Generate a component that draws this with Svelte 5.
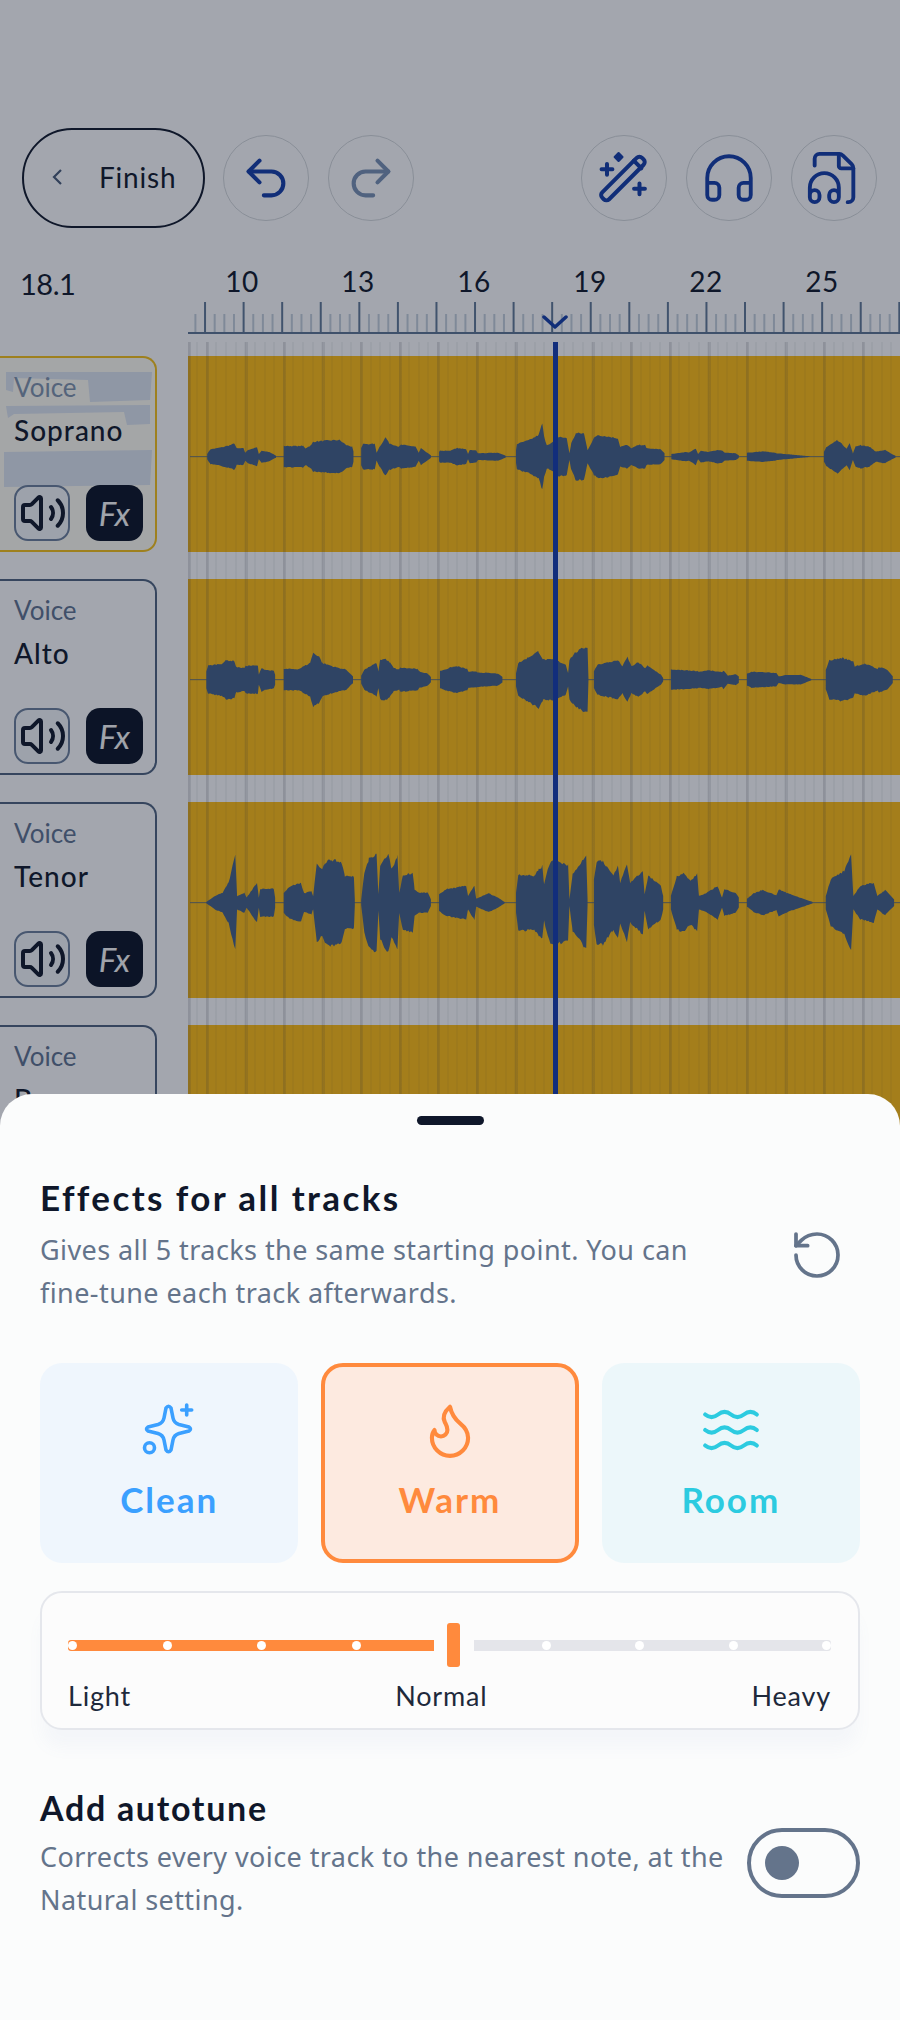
<script>
  // waveform envelopes, [x, half height] in a 1568x588 box
  const waves = [
    [
      [[38,8],[45,22],[70,28],[90,35],[98,40],[103,25],[118,25],[122,12],[128,20],[148,28],[152,8],[158,18],[175,14],[190,3]],
      [[207,32],[250,32],[255,25],[268,35],[272,45],[300,48],[330,50],[345,35],[358,30],[361,15]],
      [[378,25],[382,38],[408,38],[412,12],[418,28],[432,58],[440,40],[462,30],[466,36],[498,30],[505,12],[510,25],[532,4]],
      [[550,14],[552,18],[575,18],[590,26],[610,22],[614,8],[618,20],[632,18],[636,10],[680,12],[697,3]],
      [[720,20],[722,38],[750,50],[770,65],[778,100],[782,60],[788,35],[800,42],[815,60],[832,55],[838,10],[842,40],[852,70],[870,70],[878,20],[892,55],[900,65],[925,60],[945,55],[950,30],[965,35],[975,25],[990,35],[1005,35],[1008,25],[1040,22],[1048,10]],
      [[1063,8],[1095,14],[1102,12],[1117,25],[1122,8],[1128,18],[1145,14],[1165,20],[1176,18],[1180,12],[1205,10],[1212,4]],
      [[1230,12],[1265,16],[1292,12],[1296,10],[1330,6],[1368,1]],
      [[1400,15],[1405,28],[1430,50],[1450,25],[1457,40],[1464,10],[1470,30],[1480,35],[1500,30],[1515,15],[1535,20],[1550,8],[1558,3]]
    ],
    [
      [[36,25],[40,42],[70,48],[80,58],[98,56],[102,38],[120,35],[124,42],[150,42],[152,15],[158,36],[165,30],[185,26],[188,15]],
      [[207,32],[240,32],[265,50],[272,80],[285,70],[292,50],[320,38],[345,30],[360,10]],
      [[378,12],[385,30],[412,50],[416,25],[420,60],[432,62],[442,50],[450,35],[462,30],[464,36],[502,32],[506,25],[525,18],[532,8]],
      [[552,26],[580,38],[590,40],[612,32],[615,24],[632,24],[635,22],[680,18],[690,8]],
      [[720,20],[725,50],[745,65],[770,85],[780,60],[805,60],[830,45],[835,20],[838,60],[850,80],[868,95],[878,98],[880,2]],
      [[892,25],[900,45],[945,58],[955,40],[966,68],[975,40],[990,52],[1005,35],[1010,42],[1040,15],[1045,5]],
      [[1062,30],[1095,28],[1120,26],[1125,24],[1145,28],[1175,22],[1178,28],[1188,12],[1205,16],[1212,10]],
      [[1230,18],[1240,24],[1295,20],[1300,10],[1315,14],[1350,14],[1372,2]],
      [[1404,30],[1412,58],[1440,65],[1465,55],[1468,40],[1490,48],[1505,40],[1518,32],[1522,38],[1540,30],[1552,10]]
    ],
    [
      [[36,2],[55,20],[72,30],[85,60],[100,140],[104,20],[120,30],[125,15],[148,60],[152,15],[155,42],[185,42],[188,15]],
      [[207,30],[220,48],[245,58],[252,28],[268,35],[272,20],[280,120],[292,100],[298,120],[312,130],[335,120],[342,80],[362,78],[364,10]],
      [[378,8],[385,90],[395,130],[412,150],[416,25],[420,110],[438,150],[445,100],[458,140],[462,30],[470,80],[492,90],[496,40],[505,30],[525,30],[532,10]],
      [[550,25],[565,40],[610,50],[614,20],[628,52],[632,12],[660,28],[680,15],[695,2]],
      [[720,30],[725,85],[760,80],[770,100],[778,110],[782,55],[790,100],[798,128],[835,115],[838,10],[845,85],[875,140],[878,10]],
      [[892,70],[898,125],[912,125],[935,80],[945,110],[950,60],[965,115],[972,60],[1000,95],[1004,25],[1012,80],[1040,50],[1045,20]],
      [[1062,20],[1075,80],[1090,88],[1105,65],[1120,85],[1124,20],[1140,28],[1165,50],[1175,15],[1180,40],[1205,30],[1212,15]],
      [[1230,12],[1245,28],[1265,38],[1295,22],[1300,40],[1320,28],[1350,14],[1375,2]],
      [[1404,20],[1415,70],[1445,95],[1460,140],[1465,20],[1480,50],[1510,60],[1518,20],[1535,38],[1555,10]]
    ]
  ];
  const mid = 302;

  let seed = 7;
  function rnd() {
    seed = (seed * 16807) % 2147483647;
    return seed / 2147483647;
  }

  function sample(seg) {
    const out = [];
    for (let i = 0; i < seg.length - 1; i++) {
      const [x0, a0] = seg[i];
      const [x1, a1] = seg[i + 1];
      for (let x = x0; x < x1; x += 3) {
        out.push([x, a0 + ((a1 - a0) * (x - x0)) / (x1 - x0)]);
      }
    }
    out.push(seg[seg.length - 1]);
    return out;
  }

  function wavePath(segs) {
    let d = "";
    for (const seg of segs) {
      const pts = sample(seg);
      const top = pts.map(([x, a]) => `${x} ${(mid - a * (0.96 + rnd() * 0.08)).toFixed(1)}`);
      const bot = pts.reverse().map(([x, a]) => `${x} ${(mid + a * (0.96 + rnd() * 0.08)).toFixed(1)}`);
      d += "M" + top.concat(bot).join("L") + "Z";
    }
    return d;
  }

  const tracks = [
    { name: "Soprano", selected: true, wave: waves[0] },
    { name: "Alto", wave: waves[1] },
    { name: "Tenor", wave: waves[2] },
    { name: "Bass" }
  ];

  const rulerLabels = [10, 13, 16, 19, 22, 25];
  const step = 38.57 / 4;
  const ticks = Array.from({ length: 74 }, (_, i) => ({ x: 7.4 + i * step, major: (i - 1) % 4 === 0 }));

  const dotsOn = [0, 1, 2, 3];
  const dotsOff = [1, 2, 3, 4];
</script>

<div class="app">
  <div class="screen">
    <div class="topbar">
      <button class="finish">
        <svg class="chev" viewBox="0 0 12 20"><path d="M10 3 3 10l7 7" /></svg>
        <span>Finish</span>
      </button>
      <button class="round">
        <svg width="52" height="52" viewBox="0 0 24 24" class="ico navy"><path d="M9 14 4 9l5-5" /><path d="M4 9h10.5a5.5 5.5 0 0 1 0 11H11" /></svg>
      </button>
      <button class="round">
        <svg width="52" height="52" viewBox="0 0 24 24" class="ico slate"><path d="m15 14 5-5-5-5" /><path d="M20 9H9.5a5.5 5.5 0 0 0 0 11H13" /></svg>
      </button>
      <div class="spacer"></div>
      <button class="round">
        <svg width="52" height="52" viewBox="0 0 48 48" class="wand">
          <rect x="-3" y="20" width="52" height="9" rx="3.5" transform="rotate(-45 23 24.5)" />
          <path d="M33 8l7 7" />
          <path d="M8.3 11v10M3.3 16h10M38.3 29v10M33.3 34h10" />
          <path class="gem" d="M19 1l3.6 3.6L19 8.2l-3.6-3.6z" />
        </svg>
      </button>
      <button class="round">
        <svg width="58" height="58" viewBox="0 0 24 24" class="ico navy thin"><path d="M3 14h3a2 2 0 0 1 2 2v3a2 2 0 0 1-2 2H5a2 2 0 0 1-2-2v-7a9 9 0 0 1 18 0v7a2 2 0 0 1-2 2h-1a2 2 0 0 1-2-2v-3a2 2 0 0 1 2-2h3" /></svg>
      </button>
      <button class="round">
        <svg width="58" height="58" viewBox="0 0 24 24" class="ico navy thin"><path d="M4 6.835V4a2 2 0 0 1 2-2h8a2.4 2.4 0 0 1 1.706.706l3.588 3.588A2.4 2.4 0 0 1 20 8v12a2 2 0 0 1-2 2h-.343" /><path d="M14 2v5a1 1 0 0 0 1 1h5" /><path d="M2 19a2 2 0 0 1 4 0v1a2 2 0 0 1-4 0v-4a6 6 0 0 1 12 0v4a2 2 0 0 1-4 0v-1a2 2 0 0 1 4 0" /></svg>
      </button>
    </div>

    <div class="head">
      <div class="time">18.1</div>
      <div class="ruler">
        <div class="labels">
          {#each rulerLabels as n}
            <span>{n}</span>
          {/each}
        </div>
        <svg class="ticks" width="712" height="34">
          {#each ticks as t}
            <line x1={t.x} x2={t.x} y1={t.major ? 1 : 13} y2="32" class:major={t.major} />
          {/each}
          <rect class="base" x="0" y="31" width="712" height="2" />
        </svg>
        <svg class="chevron" width="26" height="16" viewBox="0 0 26 16"><path d="M2 3l11 10L24 3" /></svg>
      </div>
    </div>

    <div class="area">
      <div class="grid-lines"></div>
      {#each tracks as t}
        <div class="row">
          <div class="label" class:selected={t.selected}>
            {#if t.selected}
              <svg class="smudge" width="157" height="196">
                <path d="M6 16 152 16 150 44 90 46 88 24 14 22 13 36 6 34Z" />
                <path d="M6 50 150 49 150 68 127 69 124 56 14 58 8 62Z" />
                <path d="M4 96 152 94 150 129 4 131Z" />
              </svg>
            {/if}
            <div class="kind">Voice</div>
            <div class="name">{t.name}</div>
            {#if t.wave}
              <div class="btns">
                <span class="spk">
                  <svg width="48" height="48" viewBox="0 0 24 24" class="ico dark"><path d="M11 4.702a.705.705 0 0 0-1.203-.498L6.413 7.587A1.4 1.4 0 0 1 5.416 8H3a1 1 0 0 0-1 1v6a1 1 0 0 0 1 1h2.416a1.4 1.4 0 0 1 .997.413l3.383 3.384A.705.705 0 0 0 11 19.298z" /><path d="M16 9a5 5 0 0 1 0 6" /><path d="M19.364 18.364a9 9 0 0 0 0-12.728" /></svg>
                </span>
                <span class="fx">Fx</span>
              </div>
            {/if}
          </div>
          <div class="clip">
            {#if t.wave}
              <svg class="wave" viewBox="0 0 1568 588" preserveAspectRatio="none">
                <line x1="0" x2="1568" y1={mid} y2={mid} />
                <path d={wavePath(t.wave)} />
              </svg>
            {/if}
          </div>
        </div>
      {/each}
      <div class="playhead"></div>
    </div>
  </div>

  <div class="scrim"></div>

  <div class="sheet">
    <div class="handle"></div>
    <h2>Effects for all tracks</h2>
    <div class="intro">
      <p>Gives all 5 tracks the same starting point. You can fine-tune each track afterwards.</p>
      <svg width="56" height="56" viewBox="0 0 24 24" class="ico gray reset"><path d="M3 12a9 9 0 1 0 9-9 9.75 9.75 0 0 0-6.74 2.74L3 8" /><path d="M3 3v5h5" /></svg>
    </div>

    <div class="presets">
      <div class="preset clean">
        <svg width="54" height="54" viewBox="0 0 54 54" class="ico star">
          <path d="M24 5Q26.5 1.5 29 5L31 15Q32 20 37 21.5L47 24Q50 26 47 28L37 30.5Q32 32 31 37L29 47Q26.5 50.5 24 47L22 37Q21 32 16 30.5L6 28Q3 26 6 24L16 21.5Q21 20 22 15Z" />
          <path d="M44.7 2v10M39.7 7h10" />
          <circle cx="7.5" cy="44.7" r="5" />
        </svg>
        <span>Clean</span>
      </div>
      <div class="preset warm">
        <svg width="62" height="62" viewBox="0 0 24 24" class="ico thin"><path d="M8.5 14.5A2.5 2.5 0 0 0 11 12c0-1.38-.5-2-1-3-1.072-2.143-.224-4.054 2-6 .5 2.5 2 4.9 4 6.5 2 1.6 3 3.5 3 5.5a7 7 0 1 1-14 0c0-1.153.433-2.294 1-3a2.5 2.5 0 0 0 2.5 2.5z" /></svg>
        <span>Warm</span>
      </div>
      <div class="preset room">
        <svg width="64" height="64" viewBox="0 0 24 24" class="ico thin"><path d="M2 6c.6.5 1.2 1 2.5 1C7 7 7 5 9.5 5c2.6 0 2.4 2 5 2 2.5 0 2.5-2 5-2 1.3 0 1.9.5 2.5 1" /><path d="M2 12c.6.5 1.2 1 2.5 1 2.5 0 2.5-2 5-2 2.6 0 2.4 2 5 2 2.5 0 2.5-2 5-2 1.3 0 1.9.5 2.5 1" /><path d="M2 18c.6.5 1.2 1 2.5 1 2.5 0 2.5-2 5-2 2.6 0 2.4 2 5 2 2.5 0 2.5-2 5-2 1.3 0 1.9.5 2.5 1" /></svg>
        <span>Room</span>
      </div>
    </div>

    <div class="amount">
      <div class="slider">
        <div class="fill">
          {#each dotsOn as d}<i></i>{/each}
        </div>
        <div class="thumb"></div>
        <div class="rest">
          {#each dotsOff as d}<i></i>{/each}
        </div>
      </div>
      <div class="scale">
        <span>Light</span>
        <span>Normal</span>
        <span>Heavy</span>
      </div>
    </div>

    <h2 class="second">Add autotune</h2>
    <div class="auto">
      <p>Corrects every voice track to the nearest note, at the Natural setting.</p>
      <div class="toggle"><b></b></div>
    </div>
  </div>
</div>

<style>
  :global(body) {
    margin: 0;
    background: #fff;
  }
  .app {
    position: relative;
    width: 900px;
    height: 2020px;
    overflow: hidden;
    font-family: "Lato", "Noto Sans", sans-serif;
    color: #0f172a;
  }
  .screen {
    background: #fdfeff;
    height: 2020px;
  }
  .topbar {
    display: flex;
    align-items: center;
    gap: 19px;
    height: 100px;
    padding: 128px 23px 0 22px;
  }
  .spacer {
    flex: 1;
  }
  button {
    font: inherit;
    color: inherit;
    background: none;
    padding: 0;
  }
  .finish {
    display: flex;
    align-items: center;
    width: 183px;
    height: 100px;
    flex: none;
    margin-right: -1px;
    box-sizing: border-box;
    border: 2.5px solid #0f172a;
    border-radius: 50px;
    padding: 0 0 2px 27px;
    font-size: 28px;
    letter-spacing: 0.8px;
  }
  .chev {
    width: 12px;
    height: 20px;
    margin-right: 36px;
    fill: none;
    stroke: #475a78;
    stroke-width: 2.2;
  }
  .round {
    width: 86px;
    height: 86px;
    flex: none;
    display: flex;
    align-items: center;
    justify-content: center;
    border: 1.5px solid #d4d7db;
    border-radius: 50%;
    box-sizing: border-box;
  }
  .ico {
    fill: none;
    stroke-width: 2;
    stroke-linecap: round;
    stroke-linejoin: round;
    stroke: currentColor;
  }
  .ico.thin {
    stroke-width: 1.6;
  }
  .ico.star {
    stroke-width: 3.6;
  }
  .ico.reset {
    stroke-width: 1.6;
  }
  .navy {
    color: #123ca8;
    stroke-width: 1.9;
  }
  .slate {
    color: #7890b4;
    stroke-width: 1.9;
  }
  .dark {
    color: #0f172a;
  }
  .gray {
    color: #64748b;
    flex: none;
  }
  .reset {
    align-self: flex-start;
    margin-top: -1px;
  }
  .wand {
    fill: none;
    stroke: #123ca8;
    stroke-width: 3.7;
    stroke-linecap: round;
    stroke-linejoin: round;
    overflow: visible;
  }
  .wand .gem {
    fill: #123ca8;
    stroke-width: 2;
  }
  .head {
    display: grid;
    grid-template-columns: 188px 1fr;
    height: 114px;
  }
  .time {
    padding: 37px 0 0 20px;
    font-size: 29px;
    line-height: 38px;
    letter-spacing: -0.5px;
  }
  .ruler {
    position: relative;
  }
  .labels {
    display: flex;
    margin: 35px 0 2px -4px;
    height: 36px;
    font-size: 28px;
    line-height: 36px;
    letter-spacing: 0.5px;
  }
  .labels span {
    width: 116px;
    flex: none;
    text-align: center;
  }
  .ticks {
    display: block;
  }
  .ticks line {
    stroke: #c4cfdc;
    stroke-width: 2;
  }
  .ticks line.major {
    stroke: #5f7897;
  }
  .ticks .base {
    fill: #5d7594;
  }
  .chevron {
    position: absolute;
    left: 354px;
    top: 86px;
    fill: none;
    stroke: #123ca8;
    stroke-width: 3.5;
    stroke-linecap: round;
    stroke-linejoin: round;
  }
  .area {
    position: relative;
    padding-top: 14px;
    display: flex;
    flex-direction: column;
    gap: 27px;
  }
  .grid-lines {
    position: absolute;
    left: 188px;
    right: 0;
    top: 0;
    bottom: 0;
    background-image:
      repeating-linear-gradient(90deg, rgba(50, 50, 70, 0.12) 0 3px, transparent 3px 38.58px),
      repeating-linear-gradient(90deg, rgba(60, 60, 60, 0.05) 0 2px, transparent 2px 9.645px);
    background-position: 18px 0, 8px 0;
    z-index: 2;
  }
  .row {
    display: flex;
    height: 196px;
    gap: 31px;
  }
  .label {
    position: relative;
    flex: none;
    width: 157px;
    height: 196px;
    box-sizing: border-box;
    border: 2px solid #4e627f;
    border-left: 0;
    border-radius: 0 14px 14px 0;
    padding: 12px 0 0 14px;
  }
  .label.selected {
    border-color: #f5c118;
    background: #fffdf4;
  }
  .selected .kind {
    color: #7f93ad;
  }
  .smudge {
    position: absolute;
    left: 0;
    top: -2px;
    fill: #dde5f0;
  }
  .kind {
    position: relative;
    font-size: 26px;
    line-height: 34px;
    color: #5e7290;
  }
  .name {
    position: relative;
    margin-top: 9px;
    font-size: 28px;
    line-height: 34px;
    font-weight: 500;
    letter-spacing: 1px;
  }
  .btns {
    position: absolute;
    left: 14px;
    top: 127px;
    display: flex;
    gap: 16px;
  }
  .spk {
    width: 56px;
    height: 56px;
    box-sizing: border-box;
    display: flex;
    align-items: center;
    justify-content: center;
    border: 2px solid #6b7f9b;
    border-radius: 14px;
    background: #f4f7fb;
  }
  .spk svg {
    flex: none;
    transform: translateX(1px);
  }
  .fx {
    width: 57px;
    height: 56px;
    display: flex;
    align-items: center;
    justify-content: center;
    border-radius: 14px;
    background: #0a1326;
    color: #f8f8f8;
    font-size: 33px;
    font-style: italic;
  }
  .clip {
    position: relative;
    flex: 1;
    background: #ffbd12;
  }
  .wave {
    position: absolute;
    left: 2px;
    top: 0;
    width: 710px;
    height: 196px;
    fill: #436088;
    z-index: 3;
  }
  .wave line {
    stroke: #436088;
    stroke-width: 2;
  }
  .playhead {
    position: absolute;
    left: 553px;
    top: 0;
    width: 5px;
    bottom: 0;
    background: #143caf;
    z-index: 4;
  }
  .scrim {
    position: absolute;
    inset: 0;
    background: rgba(15, 23, 42, 0.38);
    z-index: 5;
  }
  .sheet {
    position: absolute;
    left: 0;
    right: 0;
    top: 1094px;
    bottom: 0;
    box-sizing: border-box;
    padding: 0 40px;
    background: #fbfcfc;
    border-radius: 32px 32px 0 0;
    z-index: 6;
  }
  .handle {
    width: 67px;
    height: 9px;
    margin: 22px auto 0;
    border-radius: 5px;
    background: #0f172a;
  }
  h2 {
    margin: 50px 0 0;
    font-size: 35px;
    line-height: 44px;
    font-weight: 700;
    letter-spacing: 2.4px;
  }
  .intro,
  .auto {
    display: flex;
    justify-content: space-between;
    align-items: center;
  }
  .intro {
    margin-top: 9px;
    padding-right: 15px;
  }
  p {
    margin: 0;
    font-family: "Noto Sans", sans-serif;
    font-size: 27px;
    line-height: 43px;
    letter-spacing: 0.42px;
    color: #64748b;
  }
  .intro p {
    width: 665px;
  }
  .presets {
    display: grid;
    grid-template-columns: repeat(3, 1fr);
    gap: 22.5px;
    margin-top: 49px;
  }
  .preset {
    height: 200px;
    box-sizing: border-box;
    border-radius: 22px;
    display: flex;
    flex-direction: column;
    align-items: center;
    padding-top: 36px;
    font-size: 35px;
    font-weight: 700;
    letter-spacing: 2px;
  }
  .preset svg {
    height: 62px;
    margin-bottom: 17px;
  }
  .clean {
    background: #eff6fd;
    color: #3ba0ff;
  }
  .warm {
    background: #fdeae0;
    color: #ff8a3d;
    border: 4px solid #ff8a3d;
    padding-top: 32px;
  }
  .room {
    background: #ecf7fa;
    color: #2ccbe0;
  }
  .amount {
    margin-top: 28px;
    height: 139px;
    box-sizing: border-box;
    border: 2px solid #e5e7ec;
    border-radius: 22px;
    padding: 30px 27px 0 26px;
    background: #fcfcfc;
    box-shadow: 0 20px 16px -2px rgba(120, 140, 190, 0.05);
  }
  .slider {
    display: flex;
    align-items: center;
    height: 44px;
  }
  .fill,
  .rest {
    height: 11px;
    display: flex;
    align-items: center;
    justify-content: space-between;
    box-sizing: border-box;
  }
  .fill {
    width: 366px;
    padding-right: 73px;
    background: #ff8a3d;
    border-radius: 3px 0 0 3px;
  }
  .rest {
    flex: 1;
    padding-left: 68px;
    background: #e4e5ea;
    border-radius: 0 3px 3px 0;
  }
  .slider i {
    width: 9px;
    height: 9px;
    border-radius: 50%;
    background: #fff;
  }
  .thumb {
    width: 13px;
    height: 44px;
    margin: 0 14px 0 13px;
    border-radius: 3px;
    background: #ff8a3d;
  }
  .scale {
    display: flex;
    justify-content: space-between;
    margin-top: 12px;
    font-size: 27px;
    line-height: 34px;
    color: #1e293b;
    letter-spacing: 0.8px;
  }
  h2.second {
    margin-top: 56px;
    font-size: 34px;
    letter-spacing: 1.7px;
  }
  .auto {
    margin-top: 5px;
    align-items: flex-start;
  }
  .auto p {
    width: 690px;
  }
  .toggle {
    width: 113px;
    height: 70px;
    flex: none;
    box-sizing: border-box;
    border: 4px solid #64748b;
    border-radius: 35px;
    margin-top: -7px;
    padding: 14px 0 0 14px;
  }
  .toggle b {
    display: block;
    width: 34px;
    height: 34px;
    border-radius: 50%;
    background: #64748b;
  }
</style>
